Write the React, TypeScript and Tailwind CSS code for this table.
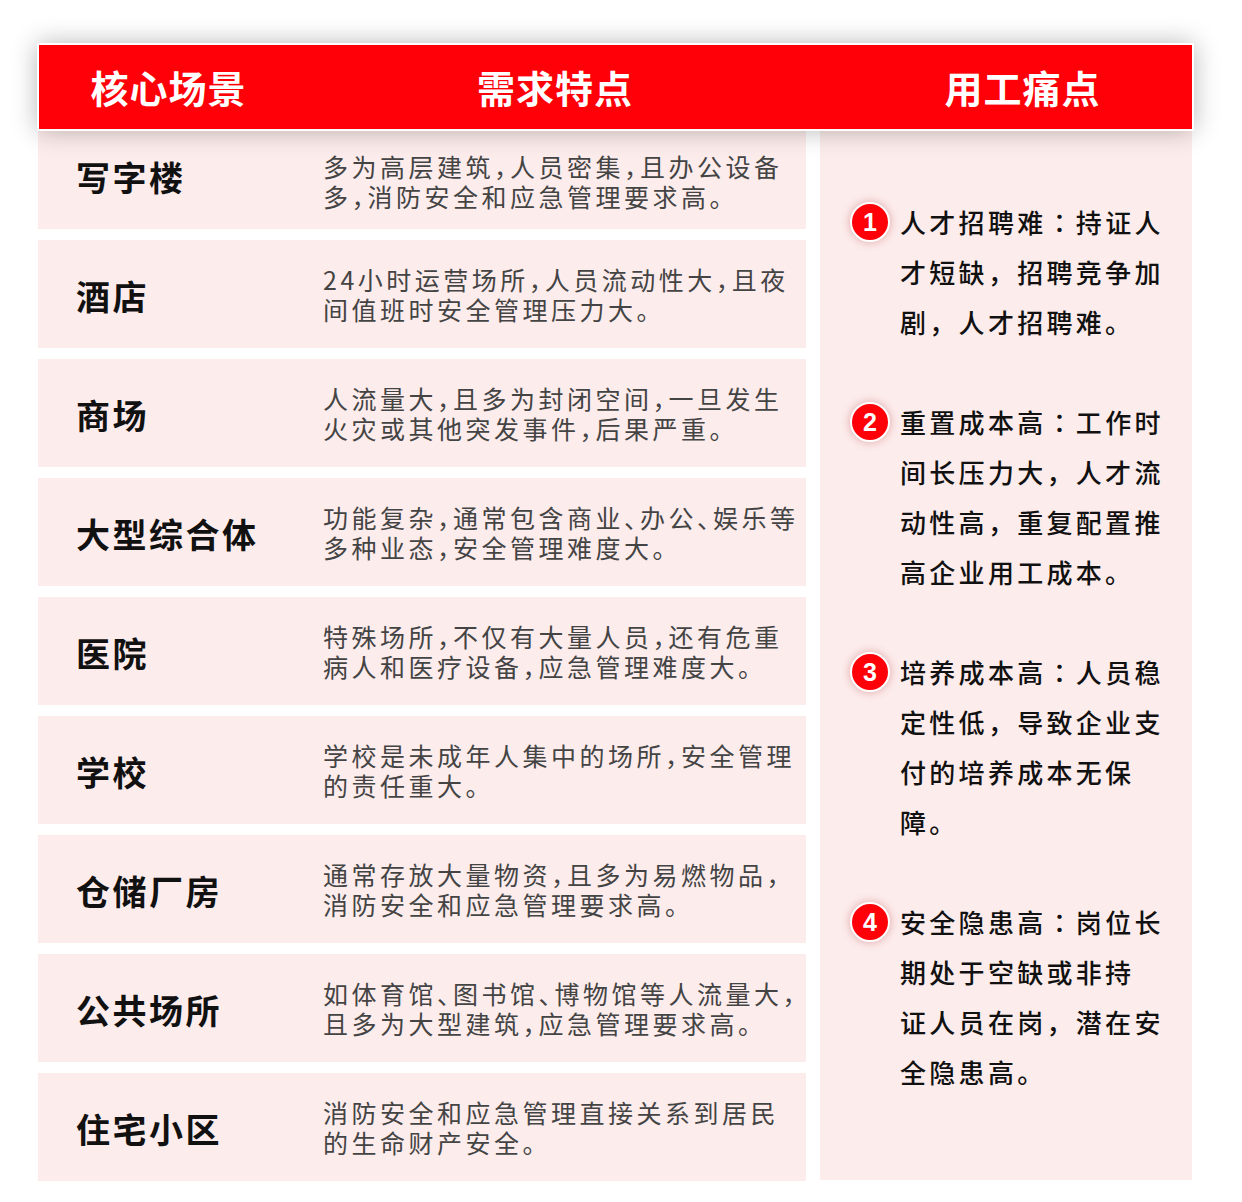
import React from "react";

const rows: { name: string; lines: string[] }[] = [
  { name: "写字楼", lines: ["多为高层建筑，人员密集，且办公设备", "多，消防安全和应急管理要求高。"] },
  { name: "酒店", lines: ["24小时运营场所，人员流动性大，且夜", "间值班时安全管理压力大。"] },
  { name: "商场", lines: ["人流量大，且多为封闭空间，一旦发生", "火灾或其他突发事件，后果严重。"] },
  { name: "大型综合体", lines: ["功能复杂，通常包含商业、办公、娱乐等", "多种业态，安全管理难度大。"] },
  { name: "医院", lines: ["特殊场所，不仅有大量人员，还有危重", "病人和医疗设备，应急管理难度大。"] },
  { name: "学校", lines: ["学校是未成年人集中的场所，安全管理", "的责任重大。"] },
  { name: "仓储厂房", lines: ["通常存放大量物资，且多为易燃物品，", "消防安全和应急管理要求高。"] },
  { name: "公共场所", lines: ["如体育馆、图书馆、博物馆等人流量大，", "且多为大型建筑，应急管理要求高。"] },
  { name: "住宅小区", lines: ["消防安全和应急管理直接关系到居民", "的生命财产安全。"] },
];

const pains: string[][] = [
  ["人才招聘难：持证人", "才短缺，招聘竞争加", "剧，人才招聘难。"],
  ["重置成本高：工作时", "间长压力大，人才流", "动性高，重复配置推", "高企业用工成本。"],
  ["培养成本高：人员稳", "定性低，导致企业支", "付的培养成本无保", "障。"],
  ["安全隐患高：岗位长", "期处于空缺或非持", "证人员在岗，潜在安", "全隐患高。"],
];

function PainLine({ text }: { text: string }) {
  const parts = text.split("：");
  if (parts.length === 1) return <div>{text}</div>;
  return (
    <div>
      {parts[0]}
      <span className="font-['Noto_Sans_CJK_JP',sans-serif]">：</span>
      {parts[1]}
    </div>
  );
}

export default function App() {
  return (
    <div className="w-[1242px] h-[1202px] bg-white font-['Noto_Sans_CJK_SC','Noto_Sans',sans-serif] pt-[43px] pl-[37px] overflow-hidden">
      {/* header */}
      <div className="relative z-10 w-[1157px] h-[88px] border-2 border-white bg-[#ff0008] shadow-[0_0_24px_rgba(0,0,0,0.28)] flex items-center text-white font-bold text-[38px] tracking-[1px] leading-none">
        <div className="w-[259px] text-center whitespace-nowrap">核心场景</div>
        <div className="w-[514px] text-center whitespace-nowrap">需求特点</div>
        <div className="flex-1 pl-[41px] text-center whitespace-nowrap">用工痛点</div>
      </div>

      {/* body */}
      <div className="-mt-[10px] ml-px flex gap-[14px]">
        <div className="w-[768px] flex flex-col gap-[11px]">
          {rows.map((r, idx) => (
            <div key={r.name} className="h-[108px] bg-[#fdecec] flex items-center">
              <div className="w-[285px] pl-[38px] pt-[3px] text-[34px] font-bold tracking-[2.5px] text-[#111] whitespace-nowrap">
                {r.name}
              </div>
              <div
                className={
                  "text-[25px] leading-[30px] tracking-[3.5px] text-[#444] whitespace-nowrap [font-feature-settings:'halt'] " +
                  (idx === 0 ? "pt-[12px]" : "")
                }
              >
                {r.lines.map((l, i) => (
                  <div key={i}>{l}</div>
                ))}
              </div>
            </div>
          ))}
        </div>

        <div className="w-[372px] h-[1059px] bg-[#fdecec] pt-[76px] pl-[30px]">
          {pains.map((p, idx) => (
            <div key={idx} className="flex mb-[50px]">
              <div className="w-[40px] h-[50px] flex items-center shrink-0">
                <div className="w-[40px] h-[40px] rounded-full bg-[#ff0008] border-2 border-white shadow-[0_0_10px_rgba(150,0,0,0.3)] flex items-center justify-center text-white font-bold text-[25px] leading-none font-['Liberation_Sans',sans-serif]">
                  {idx + 1}
                </div>
              </div>
              <div className="ml-[10px] text-[26px] leading-[50px] tracking-[3.3px] font-medium text-[#111] whitespace-nowrap">
                {p.map((l, i) => (
                  <PainLine key={i} text={l} />
                ))}
              </div>
            </div>
          ))}
        </div>
      </div>
    </div>
  );
}
